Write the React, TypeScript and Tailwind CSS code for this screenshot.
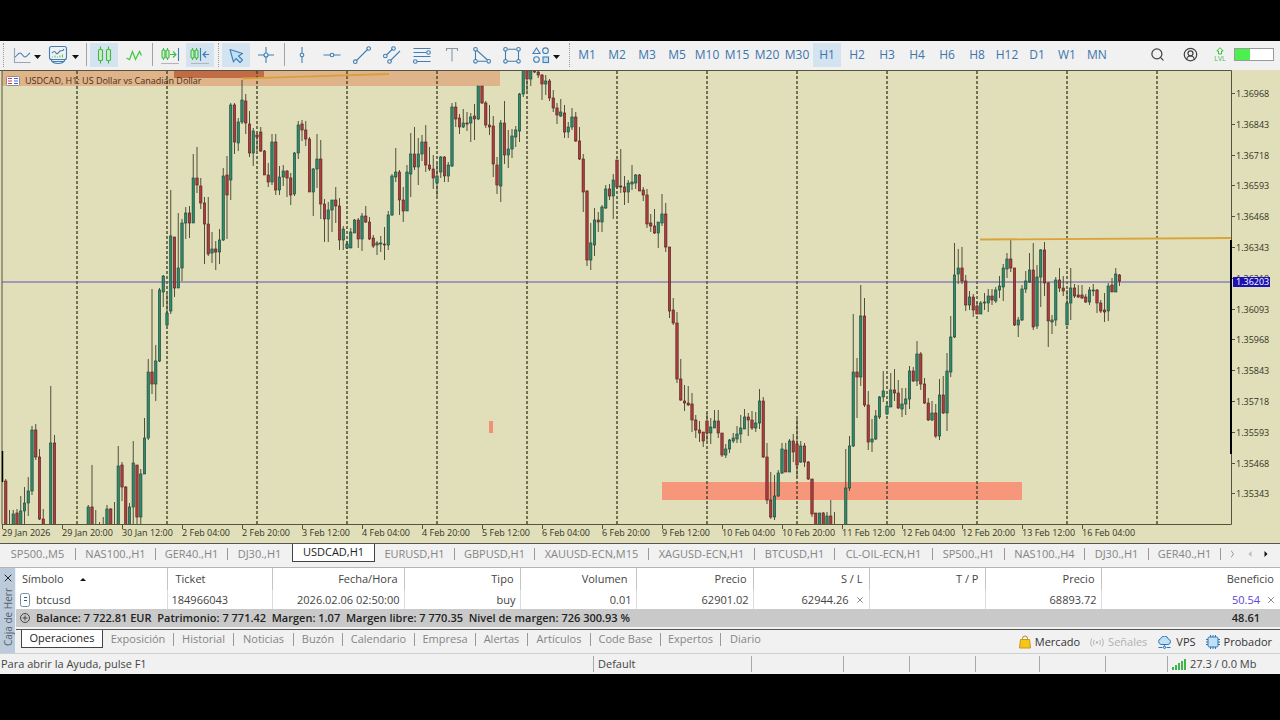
import React, { useState } from 'react'
import clsx from 'clsx'
import { Search, CircleUserRound, X } from 'lucide-react'

type Candle = [number, number, number, number, number, number]

// bar index, high, body top, body bottom, low, 1 = bull / 0 = bear
const CANDLES: Candle[] = [
  [1, 479, 481, 530, 530, 0], [2, 510, 527, 530, 530, 0], [3, 510, 514, 530, 530, 1], [4, 509, 513, 530, 530, 0],
  [5, 496, 511, 530, 530, 1], [6, 487, 503, 511, 530, 1], [7, 477, 491, 503, 516, 1], [8, 426, 430, 491, 495, 1],
  [9, 424, 430, 457, 460, 0], [10, 449, 457, 519, 520, 0], [11, 509, 519, 530, 530, 0], [13, 386, 443, 530, 530, 1],
  [14, 435, 443, 530, 530, 0], [23, 505, 507, 530, 530, 1], [24, 465, 507, 530, 530, 0], [25, 510, 527, 530, 530, 0],
  [26, 522, 527, 530, 530, 0], [27, 517, 527, 530, 530, 1], [28, 505, 509, 530, 530, 1], [29, 508, 509, 530, 530, 0],
  [30, 502, 527, 530, 530, 0], [31, 446, 466, 530, 530, 1], [32, 462, 465, 487, 501, 0], [33, 486, 487, 530, 530, 0],
  [34, 503, 507, 530, 530, 1], [35, 441, 463, 507, 530, 1], [36, 465, 465, 517, 524, 0], [37, 469, 474, 517, 524, 1],
  [38, 418, 438, 474, 474, 1], [39, 359, 372, 438, 440, 1], [40, 289, 372, 384, 394, 0], [41, 345, 361, 384, 401, 1],
  [42, 288, 290, 361, 362, 1], [43, 275, 276, 292, 307, 1], [44, 294, 313, 325, 326, 1], [45, 190, 236, 311, 314, 1],
  [46, 237, 237, 288, 297, 0], [47, 213, 268, 288, 288, 1], [48, 219, 223, 268, 281, 1], [49, 207, 213, 223, 239, 1],
  [50, 206, 213, 223, 238, 0], [51, 154, 178, 223, 223, 1], [52, 147, 178, 185, 193, 0], [53, 178, 186, 203, 209, 0],
  [54, 197, 203, 224, 264, 0], [55, 197, 224, 254, 256, 0], [56, 232, 249, 253, 263, 1], [57, 241, 249, 252, 270, 0],
  [58, 229, 240, 252, 264, 1], [59, 168, 176, 240, 241, 1], [60, 156, 175, 195, 239, 0], [61, 103, 105, 180, 200, 1],
  [62, 103, 105, 142, 154, 0], [63, 118, 122, 143, 151, 1], [64, 80, 100, 122, 124, 1], [65, 94, 101, 123, 134, 0],
  [66, 111, 124, 153, 157, 0], [67, 128, 131, 153, 166, 1], [68, 133, 135, 137, 151, 0], [69, 127, 132, 151, 152, 0],
  [70, 150, 151, 175, 175, 0], [71, 163, 175, 182, 187, 0], [72, 134, 142, 182, 185, 1], [73, 134, 142, 190, 195, 0],
  [74, 166, 177, 190, 195, 1], [75, 165, 171, 177, 186, 1], [76, 170, 171, 178, 197, 0], [77, 173, 178, 195, 205, 0],
  [78, 152, 153, 194, 196, 1], [79, 121, 125, 153, 159, 1], [80, 120, 124, 130, 141, 0], [81, 121, 130, 139, 146, 0],
  [82, 137, 139, 192, 192, 0], [83, 168, 169, 192, 216, 1], [84, 134, 159, 169, 188, 1], [85, 140, 159, 204, 219, 0],
  [86, 199, 204, 219, 242, 0], [87, 202, 210, 219, 242, 1], [88, 200, 200, 210, 232, 1], [89, 187, 200, 206, 223, 0],
  [90, 198, 206, 240, 250, 0], [91, 226, 229, 240, 250, 1], [92, 241, 244, 248, 249, 1], [93, 228, 232, 248, 248, 1],
  [94, 219, 220, 233, 233, 1], [95, 218, 220, 239, 248, 0], [96, 213, 216, 239, 251, 1], [97, 206, 216, 222, 223, 0],
  [98, 217, 222, 239, 240, 0], [99, 235, 238, 246, 248, 0], [100, 241, 243, 245, 255, 1], [101, 236, 243, 244, 252, 1],
  [102, 227, 244, 245, 260, 0], [103, 211, 215, 245, 250, 1], [104, 174, 176, 215, 216, 1], [105, 148, 172, 177, 182, 1],
  [106, 170, 172, 200, 215, 0], [107, 187, 200, 211, 222, 0], [108, 165, 172, 211, 211, 1], [109, 133, 154, 174, 197, 1],
  [110, 127, 154, 167, 170, 0], [111, 138, 154, 167, 185, 1], [112, 135, 142, 154, 161, 1], [113, 125, 142, 165, 172, 0],
  [114, 147, 165, 169, 171, 0], [115, 155, 169, 178, 189, 0], [116, 163, 176, 183, 196, 1], [117, 156, 157, 172, 178, 1],
  [118, 156, 157, 176, 182, 0], [119, 162, 165, 176, 182, 1], [120, 103, 107, 166, 167, 1], [121, 102, 107, 119, 127, 0],
  [122, 114, 118, 127, 134, 0], [123, 109, 123, 127, 128, 1], [124, 112, 123, 124, 131, 0], [125, 113, 117, 123, 142, 1],
  [126, 104, 116, 119, 140, 0], [127, 86, 86, 119, 120, 1], [128, 86, 86, 103, 104, 0], [129, 101, 103, 125, 128, 0],
  [130, 105, 125, 127, 135, 0], [131, 116, 126, 164, 177, 0], [132, 157, 165, 185, 194, 0], [133, 120, 123, 186, 202, 1],
  [134, 101, 123, 155, 164, 0], [135, 130, 149, 155, 168, 1], [136, 129, 136, 149, 158, 1], [137, 126, 130, 137, 147, 1],
  [138, 93, 94, 131, 142, 1], [139, 70, 70, 94, 97, 1], [140, 70, 70, 79, 91, 0], [141, 70, 70, 79, 86, 1],
  [142, 70, 70, 72, 73, 0], [143, 70, 72, 75, 78, 0], [144, 74, 75, 84, 100, 0], [145, 75, 81, 84, 95, 1],
  [146, 79, 81, 98, 101, 0], [147, 90, 98, 108, 112, 0], [148, 103, 108, 115, 124, 0], [149, 99, 112, 116, 117, 1],
  [150, 105, 113, 132, 138, 0], [151, 122, 127, 132, 138, 1], [152, 108, 117, 127, 130, 1], [153, 112, 117, 141, 142, 0],
  [154, 127, 141, 159, 160, 0], [155, 154, 159, 192, 212, 0], [156, 190, 191, 260, 266, 0], [157, 223, 243, 260, 270, 1],
  [158, 208, 220, 245, 256, 1], [159, 212, 220, 222, 232, 0], [160, 205, 207, 222, 232, 1], [161, 185, 189, 208, 209, 1],
  [162, 184, 189, 196, 200, 0], [163, 174, 180, 196, 219, 1], [164, 160, 160, 187, 189, 0], [165, 149, 186, 187, 193, 0],
  [166, 176, 187, 192, 205, 0], [167, 180, 183, 192, 203, 1], [168, 165, 182, 184, 190, 1], [169, 174, 175, 183, 189, 1],
  [170, 174, 175, 191, 191, 0], [171, 187, 190, 195, 201, 0], [172, 189, 195, 224, 228, 0], [173, 214, 223, 226, 232, 0],
  [174, 209, 226, 233, 234, 0], [175, 222, 222, 233, 248, 1], [176, 194, 214, 223, 226, 1], [177, 203, 214, 247, 252, 0],
  [178, 247, 247, 311, 318, 0], [179, 298, 310, 323, 325, 0], [180, 312, 323, 379, 383, 0], [181, 359, 379, 400, 401, 0],
  [182, 385, 401, 403, 411, 0], [183, 386, 403, 405, 406, 0], [184, 393, 404, 420, 432, 0], [185, 415, 420, 430, 438, 0],
  [186, 421, 430, 433, 442, 0], [187, 432, 432, 441, 447, 0], [188, 413, 421, 433, 441, 0], [189, 418, 427, 433, 444, 1],
  [190, 410, 421, 428, 428, 1], [191, 410, 421, 433, 438, 0], [192, 433, 433, 455, 457, 0], [193, 444, 449, 455, 458, 1],
  [194, 439, 440, 449, 453, 1], [195, 433, 438, 441, 443, 1], [196, 426, 434, 439, 443, 1], [197, 415, 428, 434, 443, 1],
  [198, 409, 417, 429, 429, 1], [199, 413, 417, 420, 436, 0], [200, 411, 420, 428, 430, 0], [201, 412, 423, 428, 432, 1],
  [202, 389, 401, 423, 429, 1], [203, 397, 401, 457, 458, 0], [204, 443, 457, 500, 504, 0], [205, 472, 500, 517, 519, 0],
  [206, 475, 496, 517, 520, 1], [207, 470, 473, 496, 497, 1], [208, 443, 449, 473, 474, 1], [209, 443, 450, 472, 472, 0],
  [210, 439, 441, 472, 472, 1], [211, 434, 441, 452, 462, 0], [212, 419, 444, 465, 477, 0], [213, 441, 446, 462, 463, 1],
  [214, 443, 446, 462, 467, 0], [215, 461, 462, 479, 480, 0], [216, 479, 479, 514, 517, 0], [217, 513, 513, 530, 530, 0],
  [218, 513, 513, 530, 530, 1], [219, 512, 513, 530, 530, 0], [220, 512, 516, 530, 530, 1], [221, 500, 516, 530, 530, 0],
  [222, 512, 527, 530, 530, 0], [225, 449, 488, 530, 530, 1], [226, 436, 446, 488, 491, 1], [227, 314, 372, 446, 447, 1],
  [228, 358, 372, 377, 418, 0], [229, 285, 316, 377, 386, 1], [230, 298, 316, 405, 407, 0], [231, 391, 405, 442, 450, 0],
  [232, 419, 439, 442, 452, 1], [233, 410, 416, 439, 440, 1], [234, 396, 397, 417, 419, 1], [235, 371, 391, 397, 402, 1],
  [236, 402, 406, 414, 415, 1], [237, 373, 390, 407, 407, 1], [238, 369, 390, 393, 401, 0], [239, 380, 393, 408, 409, 0],
  [240, 388, 404, 409, 417, 1], [241, 388, 399, 404, 415, 1], [242, 366, 371, 399, 409, 1], [243, 367, 371, 381, 382, 0],
  [244, 341, 354, 381, 386, 1], [245, 352, 354, 384, 390, 0], [246, 378, 384, 403, 404, 0], [247, 398, 403, 420, 421, 0],
  [248, 401, 413, 420, 421, 1], [249, 404, 413, 436, 438, 0], [250, 379, 395, 436, 440, 1], [251, 376, 395, 413, 414, 0],
  [252, 353, 371, 413, 431, 1], [253, 316, 337, 372, 377, 1], [254, 243, 275, 337, 338, 1], [255, 249, 268, 274, 284, 1],
  [256, 247, 268, 281, 284, 0], [257, 275, 281, 305, 311, 0], [258, 291, 297, 305, 310, 1], [259, 294, 297, 310, 317, 0],
  [260, 302, 306, 314, 314, 0], [261, 301, 303, 314, 314, 1], [262, 293, 302, 303, 310, 1], [263, 289, 296, 303, 312, 1],
  [264, 289, 296, 300, 305, 0], [265, 287, 290, 301, 303, 1], [266, 276, 286, 290, 298, 1], [267, 264, 268, 287, 301, 1],
  [268, 253, 259, 269, 278, 1], [269, 240, 259, 268, 272, 0], [270, 268, 268, 325, 326, 0], [271, 317, 320, 325, 337, 1],
  [272, 285, 289, 320, 321, 1], [273, 271, 281, 289, 293, 1], [274, 253, 270, 282, 283, 1], [275, 243, 270, 327, 330, 0],
  [276, 265, 277, 326, 329, 1], [277, 249, 250, 277, 307, 1], [278, 242, 250, 283, 296, 0], [279, 282, 283, 321, 347, 0],
  [280, 315, 320, 322, 334, 1], [281, 277, 280, 320, 326, 1], [282, 268, 280, 288, 292, 0], [283, 276, 288, 291, 296, 0],
  [284, 290, 303, 325, 325, 1], [285, 268, 288, 303, 320, 1], [286, 284, 288, 296, 298, 0], [287, 285, 295, 297, 298, 0],
  [288, 285, 295, 298, 299, 0], [289, 294, 297, 302, 303, 0], [290, 287, 290, 302, 305, 1], [291, 284, 290, 291, 296, 1],
  [292, 289, 290, 303, 313, 0], [293, 300, 303, 311, 313, 0], [294, 293, 310, 312, 322, 0], [295, 283, 286, 311, 321, 1],
  [296, 278, 285, 292, 292, 0], [297, 268, 274, 292, 292, 1], [298, 274, 275, 281, 286, 0],
]

const PRICES = [
  '1.36968', '1.36843', '1.36718', '1.36593', '1.36468', '1.36343', '1.36218',
  '1.36093', '1.35968', '1.35843', '1.35718', '1.35593', '1.35468', '1.35343',
]

const TIMES = [
  '29 Jan 2026', '29 Jan 20:00', '30 Jan 12:00', '2 Feb 04:00', '2 Feb 20:00', '3 Feb 12:00', '4 Feb 04:00',
  '4 Feb 20:00', '5 Feb 12:00', '6 Feb 04:00', '6 Feb 20:00', '9 Feb 12:00', '10 Feb 04:00', '10 Feb 20:00',
  '11 Feb 12:00', '12 Feb 04:00', '12 Feb 20:00', '13 Feb 12:00', '16 Feb 04:00',
]

const TIMEFRAMES = [
  'M1', 'M2', 'M3', 'M5', 'M10', 'M15', 'M20', 'M30', 'H1', 'H2', 'H3', 'H4', 'H6', 'H8', 'H12', 'D1', 'W1', 'MN',
]

const CHART_TABS = [
  { name: 'SP500.,M5', width: 'w-[76px]' },
  { name: 'NAS100.,H1', width: 'w-[80px]' },
  { name: 'GER40.,H1', width: 'w-[72px]' },
  { name: 'DJ30.,H1', width: 'w-[64px]' },
  { name: 'USDCAD,H1', width: 'w-[83px]' },
  { name: 'EURUSD,H1', width: 'w-[80px]' },
  { name: 'GBPUSD,H1', width: 'w-[80px]' },
  { name: 'XAUUSD-ECN,M15', width: 'w-[114px]' },
  { name: 'XAGUSD-ECN,H1', width: 'w-[106px]' },
  { name: 'BTCUSD,H1', width: 'w-[80px]' },
  { name: 'CL-OIL-ECN,H1', width: 'w-[98px]' },
  { name: 'SP500.,H1', width: 'w-[72px]' },
  { name: 'NAS100.,H4', width: 'w-[80px]' },
  { name: 'DJ30.,H1', width: 'w-[64px]' },
  { name: 'GER40.,H1', width: 'w-[72px]' },
]

const TOOLBOX_TABS = [
  { name: 'Operaciones', width: 'w-[82px]' },
  { name: 'Exposición', width: 'w-[71px]' },
  { name: 'Historial', width: 'w-[60px]' },
  { name: 'Noticias', width: 'w-[60px]' },
  { name: 'Buzón', width: 'w-[49px]' },
  { name: 'Calendario', width: 'w-[72px]' },
  { name: 'Empresa', width: 'w-[61px]' },
  { name: 'Alertas', width: 'w-[52px]' },
  { name: 'Artículos', width: 'w-[63px]' },
  { name: 'Code Base', width: 'w-[70px]' },
  { name: 'Expertos', width: 'w-[60px]' },
  { name: 'Diario', width: 'w-[49px]' },
]

const barX = (i: number) => 2 + i * 3.75

const Icon = ({ children, color = '#3f7fb5' }: { children: React.ReactNode; color?: string }) => (
  <svg width="20" height="20" viewBox="0 0 20 20" fill="none" stroke={color} strokeWidth="1.1" aria-hidden="true">
    {children}
  </svg>
)

const Caret = () => (
  <svg width="7" height="4" viewBox="0 0 7 4" className="mt-1 shrink-0" aria-hidden="true">
    <path d="M0 0h7L3.500 4z" fill="#111" />
  </svg>
)

const Separator = () => (
  <span className="flex w-1.5 shrink-0 justify-center">
    <span className="h-[23px] w-px bg-[#a3a3a3]" />
  </span>
)

const Handle = () => (
  <span className="flex w-1.5 shrink-0 justify-center">
    <span className="h-6 border-l border-dotted border-[#999]" />
  </span>
)

type ToolProps = { label: string; active?: boolean; children: React.ReactNode }

const Tool = ({ label, active, children }: ToolProps) => (
  <button
    aria-label={label}
    className={clsx('mx-px flex h-6 w-7 shrink-0 items-center justify-center', active && 'bg-[#d3e3f0]')}
  >
    {children}
  </button>
)

const Toolbar = () => {
  const [timeframe, setTimeframe] = useState('H1')

  return (
    <header className="flex h-[29px] items-center bg-[#f1f1f1] pb-0.5">
      <Handle />
      <button aria-label="Charts" className="flex w-[37px] shrink-0 items-center gap-0.5 pl-1.5">
        <Icon>
          <path d="M2.500 3v14.500h16" stroke="#9aa4ad" />
          <path d="M3 12c2-1 3-4 5-4s3 4 5 4 3-3 5-4" />
        </Icon>
        <Caret />
      </button>
      <button aria-label="Indicators" className="flex w-10 shrink-0 items-center justify-center gap-1">
        <Icon>
          <rect x="1.500" y="1.500" width="17" height="13" rx="2" />
          <path d="M3 14.500c1 3 3 4 7 4s6-1 7-4M4.500 16.500h11" />
          <path d="M4 8c2-2 3-2 4 0s3-1 4-2 3 1 4-2" />
          <path d="M4.500 12.500v-1M7 12.500v-2M9.500 12.500v-1M12 12.500v-2M14.500 12.500v-3" stroke="#5cc95c" />
        </Icon>
        <Caret />
      </button>
      <Separator />
      <Tool label="Candles" active>
        <Icon color="#43b943">
          <path d="M6.500 1.500v3M6.500 15.500v3M14.500 1.500v3M14.500 15.500v3" />
          <rect x="4.500" y="4.500" width="4" height="11" rx="1" fill="#c9efc9" />
          <rect x="12.500" y="4.500" width="4" height="11" rx="1" fill="#c9efc9" />
        </Icon>
      </Tool>
      <Tool label="Line chart">
        <Icon color="#43c943">
          <path d="M2.500 13l3 1.500 3-8 3 8 4-8 2 4" strokeWidth="1.3" />
        </Icon>
      </Tool>
      <Separator />
      <Tool label="Auto scroll">
        <Icon color="#43b943">
          <path d="M3.500 3v12M7.500 3v12" />
          <rect x="2" y="5" width="3" height="8" rx="1" fill="#c9efc9" />
          <rect x="6" y="5" width="3" height="8" rx="1" fill="#c9efc9" />
          <path d="M10 9.500h6M13 6.500l3 3-3 3" />
          <path d="M18.500 3v13" stroke="#3f7fb5" />
          <path d="M1 18.500h18" stroke="#b5b5b5" />
        </Icon>
      </Tool>
      <Tool label="Chart shift" active>
        <Icon color="#43b943">
          <path d="M2.500 3v12M6.500 3v12" />
          <rect x="1" y="5" width="3" height="8" rx="1" fill="#c9efc9" />
          <rect x="5" y="5" width="3" height="8" rx="1" fill="#c9efc9" />
          <path d="M10.500 3v13" stroke="#3f7fb5" />
          <path d="M19 9.500h-6M16 6.500l-3 3 3 3" stroke="#3f7fb5" />
          <path d="M1 18.500h18" stroke="#b5b5b5" />
        </Icon>
      </Tool>
      <Handle />
      <Tool label="Cursor" active>
        <Icon>
          <path d="M4 4.500l12.500 4-4 2.500 4 4-2.500 2.500-4-4-2.500 3.500z" fill="#bfe0f6" strokeLinejoin="round" />
        </Icon>
      </Tool>
      <Tool label="Crosshair">
        <Icon>
          <path d="M10 2v6M10 12v6M2 10h6M12 10h6" />
          <circle cx="10" cy="10" r="2" />
        </Icon>
      </Tool>
      <Separator />
      <Tool label="Vertical line">
        <Icon>
          <path d="M10 2v6M10 12v6" />
          <circle cx="10" cy="10" r="1.800" />
        </Icon>
      </Tool>
      <Tool label="Horizontal line">
        <Icon>
          <path d="M1.500 10h6.500M12 10h6.500" />
          <circle cx="10" cy="10" r="1.800" />
        </Icon>
      </Tool>
      <Tool label="Trend line">
        <Icon>
          <path d="M4.500 15.500l11-11" />
          <circle cx="3.300" cy="16.700" r="1.800" />
          <circle cx="16.700" cy="3.500" r="1.800" />
        </Icon>
      </Tool>
      <Tool label="Channel">
        <Icon>
          <path d="M4.500 10l6-6M8.500 15.500l9.500-9.500" />
          <circle cx="3.300" cy="11" r="1.800" />
          <circle cx="11.500" cy="3.500" r="1.800" />
          <circle cx="7.500" cy="16.500" r="1.800" />
        </Icon>
      </Tool>
      <Tool label="Fibonacci">
        <Icon>
          <path d="M1.500 3.500h17M1.500 7.500h13M1.500 11.500h17M5 16.500h13.500" />
          <circle cx="16.500" cy="7.500" r="1.800" fill="#f1f1f1" />
          <circle cx="3.300" cy="16.500" r="1.800" />
        </Icon>
      </Tool>
      <Tool label="Text">
        <Icon color="#8797a5">
          <path d="M4.500 6V3.500h11V6M10 3.500v13" />
        </Icon>
      </Tool>
      <Tool label="Triangle">
        <Icon>
          <path d="M3.500 6v8.500M5.500 16.300h9M5 5.500l10.500 9.500" />
          <circle cx="3.500" cy="4.300" r="1.800" />
          <circle cx="3.500" cy="16.300" r="1.800" />
          <circle cx="16.700" cy="16.300" r="1.800" />
        </Icon>
      </Tool>
      <Tool label="Rectangle">
        <Icon>
          <path d="M3.500 6v8.500M16.500 6v8.500M5.500 4.300h9M5.500 16.300h9" />
          <circle cx="3.500" cy="4.300" r="1.800" />
          <circle cx="16.500" cy="4.300" r="1.800" />
          <circle cx="3.500" cy="16.300" r="1.800" />
          <circle cx="16.500" cy="16.300" r="1.800" />
        </Icon>
      </Tool>
      <button aria-label="Shapes" className="flex w-[39px] shrink-0 items-center gap-0.5 pl-1">
        <Icon>
          <path d="M5.500 3l3.500 5.500H2z" />
          <circle cx="14.500" cy="5.700" r="2.800" />
          <circle cx="5.500" cy="14.500" r="2.800" />
          <rect x="12" y="12" width="5.500" height="5.500" fill="#bfe0f6" />
        </Icon>
        <Caret />
      </button>
      <Handle />
      {TIMEFRAMES.map((tf) => (
        <button
          key={tf}
          onClick={() => setTimeframe(tf)}
          className={clsx(
            'mx-px h-6 w-7 shrink-0 text-[12px] text-[#3a76ac]',
            tf === timeframe && 'bg-[#d3e3f0]',
          )}
        >
          {tf}
        </button>
      ))}
      <div className="ml-auto flex items-center pr-1.5">
        <button aria-label="Search" className="mr-4.5 text-[#444]">
          <Search size={15} strokeWidth={2} />
        </button>
        <button aria-label="Account" className="mr-3.5 text-[#444]">
          <CircleUserRound size={15} strokeWidth={2} />
        </button>
        <div className="mr-1.5 flex w-4 flex-col items-center text-[#3fbf3f]">
          <svg width="8" height="8" viewBox="0 0 8 8" fill="none" stroke="currentColor" aria-hidden="true">
            <path d="M4 .7L7.200 4H5.500v3h-3V4H.8z" />
          </svg>
          <span className="text-[7px] leading-[7px]">LVL</span>
        </div>
        <div className="flex h-[13px] w-10 border border-[#999] bg-white">
          <div className="w-[15px] bg-[#4cf04c]" />
        </div>
      </div>
    </header>
  )
}

const Chart = () => (
  <svg viewBox="0 70 1280 473" className="block w-full bg-[#e0dfb9]" role="img" aria-label="USDCAD H1">
    <defs>
      <clipPath id="plot">
        <rect x="2" y="70" width="1229" height="454" />
      </clipPath>
    </defs>

    <rect x="2" y="71" width="498" height="15" fill="#dfb48b" />
    <rect x="174" y="71" width="90" height="7" fill="#c26c45" />
    <rect x="489" y="421" width="4" height="12" fill="#f38f74" />
    <rect x="662" y="482" width="360" height="18" fill="#f6977b" />

    {Array.from({ length: 13 }, (_, i) => (
      <path key={i} d={`M${77 + i * 90} 71V524`} stroke="#45442a" strokeWidth="1.400" strokeDasharray="3 2" />
    ))}
    <path d="M2 282H1231" stroke="#5856b4" strokeWidth="1.200" />

    <g clipPath="url(#plot)">
      {CANDLES.map(([i, high, top, bottom, low, bull]) => (
        <g key={i}>
          <path d={`M${barX(i)} ${high}V${low}`} stroke="#3f3f2c" strokeWidth="0.900" />
          <rect
            x={barX(i) - 1.2}
            y={top}
            width="2.400"
            height={Math.max(bottom - top, 1)}
            fill={bull ? '#2f8a6c' : '#ad3c3c'}
            stroke={bull ? '#1c4436' : '#541f1f'}
            strokeWidth="0.600"
          />
        </g>
      ))}
    </g>
    <path d="M242 78.500L389 74" stroke="#d9a03a" strokeWidth="1.800" />
    <path d="M980 239.500L1231 238" stroke="#dba43a" strokeWidth="1.800" />

    {/* frame and the two bars that show the visible range */}
    <path d="M0 70.500H1231.500V524.500H2V70.500" fill="none" stroke="#55553f" />
    <path d="M1231 240V454" stroke="#000" strokeWidth="2" />
    <path d="M2.500 451V482" stroke="#000" strokeWidth="1.500" />

    <rect x="6.500" y="76.500" width="13" height="9" rx="1" fill="#fff" stroke="#8b8ba0" />
    <path d="M8 78.500h4M8 81h4M8 83.500h4" stroke="#d04040" />
    <path d="M14 78.500h4M14 81h4M14 83.500h4" stroke="#4060d0" />
    <g fontFamily="'Open Sans', sans-serif" fontSize="9" fill="#33331f">
      <text x="25" y="84" fill="#4a3018">
        USDCAD, H1: US Dollar vs Canadian Dollar
      </text>
      {PRICES.map((price, i) => (
        <g key={price}>
          <path d={`M1232 ${Math.round(93 + i * 30.8) + 0.5}h3`} stroke="#55553f" />
          <text x="1236" y={Math.round(93 + i * 30.8) + 4}>{price}</text>
        </g>
      ))}
      {TIMES.map((time, i) => (
        <g key={time}>
          <path d={`M${2.5 + i * 60} 525v4`} stroke="#55553f" />
          <text x={2 + i * 60} y="536">{time}</text>
        </g>
      ))}
      <rect x="1233" y="277" width="37" height="10" fill="#1c12b4" />
      <text x="1236" y="285" fill="#fff">1.36203</text>
    </g>
  </svg>
)

const ChartTabs = () => {
  const [active, setActive] = useState(4)

  return (
    <nav className="flex h-6 items-start border-t border-[#555] bg-[#f1f1f1] text-[11px] text-[#858585]">
      {CHART_TABS.map((tab, i) => (
        <button
          key={i}
          onClick={() => setActive(i)}
          className={clsx(
            'flex shrink-0 items-center justify-center',
            tab.width,
            i === active
              ? 'h-[18px] border-x border-b border-[#444] bg-white text-[#222]'
              : 'mt-1 h-3 border-r border-[#999]',
            i === active - 1 && 'border-r-transparent',
          )}
        >
          {tab.name}
        </button>
      ))}
      <div className="flex h-[19px] flex-1 items-center justify-between pr-3 pl-2.5 text-[#999]">
        <svg width="4" height="8" viewBox="0 0 4 8" fill="none" stroke="currentColor" aria-hidden="true">
          <path d="M0 .5L2.500 4 0 7.500" />
        </svg>
        <button aria-label="Previous">
          <svg width="4" height="6" viewBox="0 0 4 6" className="block" aria-hidden="true">
            <path d="M3.500 0v6L.5 3z" fill="#bbb" />
          </svg>
        </button>
        <button aria-label="Next">
          <svg width="4" height="6" viewBox="0 0 4 6" className="block" aria-hidden="true">
            <path d="M.5 0v6l3-3z" fill="#111" />
          </svg>
        </button>
      </div>
    </nav>
  )
}

const HEAD = 'h-[22px] border-r border-[#c4c4c4] px-1.5 font-normal'
const CELL = 'h-[19px] border-r border-[#dcdcdc] px-1'

const Trades = () => (
  <table className="w-full table-fixed border-collapse bg-white text-right text-[11px] leading-[14px] text-[#444]">
    <colgroup>
      <col className="w-[151px]" />
      <col className="w-[105px]" />
      <col className="w-[132px]" />
      <col className="w-[116px]" />
      <col className="w-[116px]" />
      <col className="w-[117px]" />
      <col className="w-[116px]" />
      <col className="w-[116px]" />
      <col className="w-[116px]" />
      <col />
    </colgroup>
    <thead>
      <tr>
        <th className={clsx(HEAD, 'text-left')}>
          <span className="flex items-center gap-4">
            Símbolo
            <svg width="6" height="3" viewBox="0 0 6 3" aria-hidden="true">
              <path d="M0 3h6L3 0z" fill="#111" />
            </svg>
          </span>
        </th>
        <th className={clsx(HEAD, 'pl-2 text-left')}>Ticket</th>
        <th className={HEAD}>Fecha/Hora</th>
        <th className={HEAD}>Tipo</th>
        <th className={clsx(HEAD, 'pr-2')}>Volumen</th>
        <th className={HEAD}>Precio</th>
        <th className={HEAD}>S / L</th>
        <th className={HEAD}>T / P</th>
        <th className={HEAD}>Precio</th>
        <th className="h-[22px] pr-1.5 font-normal">Beneficio</th>
      </tr>
    </thead>
    <tbody>
      <tr>
        <td className={clsx(CELL, 'text-left')}>
          <span className="flex items-center gap-1.5">
            <svg width="10" height="14" viewBox="0 0 10 14" fill="none" stroke="#6d8fae" aria-hidden="true">
              <rect x=".5" y=".5" width="9" height="13" rx="2" />
              <path d="M4 4.500h3M4 7.500h3" stroke="#555" />
            </svg>
            btcusd
          </span>
        </td>
        <td className={clsx(CELL, 'text-left')}>184966043</td>
        <td className={CELL}>2026.02.06 02:50:00</td>
        <td className={CELL}>buy</td>
        <td className={CELL}>0.01</td>
        <td className={CELL}>62901.02</td>
        <td className={CELL}>
          <span className="flex items-center justify-end gap-1.5">
            62944.26
            <button aria-label="Remove stop loss">
              <X size={10} className="block text-[#777]" />
            </button>
          </span>
        </td>
        <td className={CELL} />
        <td className={CELL}>68893.72</td>
        <td className="pr-1">
          <span className="flex items-center justify-end gap-1.5">
            <span className="text-[#5a45d8]">50.54</span>
            <button aria-label="Close position">
              <X size={10} className="block text-[#777]" />
            </button>
          </span>
        </td>
      </tr>
    </tbody>
  </table>
)

const Toolbox = () => {
  const [active, setActive] = useState(0)

  return (
    <section className="flex border-t border-[#b5b5b5] bg-[#f1f1f1]">
      <div className="flex w-[15px] shrink-0 flex-col items-center bg-[#bccbdc] pt-1">
        <button aria-label="Close toolbox">
          <X size={12} className="block text-[#222]" />
        </button>
        <span className="mt-1 rotate-180 text-[10px] leading-[14px] whitespace-nowrap text-[#55606c] [writing-mode:vertical-rl]">
          Caja de Herr
        </span>
      </div>
      <div className="min-w-0 flex-1 pl-px">
        <Trades />
        <div className="flex h-[18px] items-center bg-[#c9c9c9] text-[11px] font-semibold text-[#222]">
          <svg width="10" height="10" viewBox="0 0 10 10" fill="none" stroke="#444" className="ml-1 mr-1.5" aria-hidden="true">
            <circle cx="5" cy="5" r="4.500" />
            <path d="M2.500 5h5M5 2.500v5" />
          </svg>
          <span className="whitespace-pre">
            Balance: 7 722.81 EUR  Patrimonio: 7 771.42  Margen: 1.07  Margen libre: 7 770.35  Nivel de margen: 726 300.93 %
          </span>
          <span className="mr-5 ml-auto">48.61</span>
        </div>
        <div className="mt-0.5 flex h-6 items-start border-t border-[#555] pl-[5px] text-[11px] text-[#858585]">
          {TOOLBOX_TABS.map((tab, i) => (
            <button
              key={tab.name}
              onClick={() => setActive(i)}
              className={clsx(
                'flex shrink-0 items-center justify-center',
                tab.width,
                i === active
                  ? 'h-[18px] border-x border-b border-[#444] bg-white text-[#222]'
                  : 'mt-[3px] h-[13px] border-r border-[#999] last-of-type:border-r-0',
              )}
            >
              {tab.name}
            </button>
          ))}
          <div className="mt-1 ml-auto flex items-center gap-2.5 pr-2 text-[#333]">
            <a href="#mercado" className="flex items-center gap-1">
              <svg width="12" height="14" viewBox="0 0 12 14" aria-hidden="true">
                <path d="M3.500 5V3.500a2.500 2.500 0 015 0V5" fill="none" stroke="#b08a20" />
                <path d="M1.500 4.500h9L11.500 13H.5z" fill="#f5c518" stroke="#c9981a" />
              </svg>
              Mercado
            </a>
            <a href="#senales" className="flex items-center gap-1 text-[#b0b0b0]">
              <svg width="14" height="9" viewBox="0 0 14 9" fill="none" stroke="currentColor" aria-hidden="true">
                <path d="M2 .5C.3 2.500.3 6.500 2 8.500M12 .5c1.700 2 1.700 6 0 8M4.300 2c-1 1.500-1 3.500 0 5M9.700 2c1 1.500 1 3.500 0 5" />
                <circle cx="7" cy="4.500" r=".8" fill="currentColor" />
              </svg>
              Señales
            </a>
            <a href="#vps" className="flex items-center gap-1">
              <svg width="15" height="13" viewBox="0 0 15 13" fill="#bfe0f6" stroke="#2f76b5" aria-hidden="true">
                <path d="M4 8.500a3 3 0 01-.3-5.800 4 4 0 017.600.3 2.800 2.800 0 01-.3 5.500z" />
                <path d="M7.500 8.500V11M1.500 11.500h4M9.500 11.500h4" fill="none" />
                <circle cx="7.500" cy="11.300" r="1.200" />
              </svg>
              VPS
            </a>
            <a href="#probador" className="flex items-center gap-1">
              <svg width="14" height="14" viewBox="0 0 14 14" stroke="#2f76b5" aria-hidden="true">
                <path d="M4.500 0v14M7 0v14M9.500 0v14M0 4.500h14M0 7h14M0 9.500h14" />
                <rect x="2" y="2" width="10" height="10" rx="1.500" fill="#bfe0f6" />
              </svg>
              Probador
            </a>
          </div>
        </div>
      </div>
    </section>
  )
}

const StatusBar = () => (
  <footer className="flex h-[21px] items-center border-t border-[#cfcfcf] bg-[#f1f1f1] text-[11px] text-[#444]">
    <span className="flex-1 pl-px">Para abrir la Ayuda, pulse F1</span>
    <span className="flex h-4 w-[158px] items-center border-l border-[#a8a8a8] pl-1">Default</span>
    <span className="h-4 w-[92px] border-l border-[#a8a8a8]" />
    <span className="h-4 w-[66px] border-l border-[#a8a8a8]" />
    <span className="h-4 w-[66px] border-l border-[#a8a8a8]" />
    <span className="h-4 w-[64px] border-l border-[#a8a8a8]" />
    <span className="h-4 w-[66px] border-l border-[#a8a8a8]" />
    <span className="h-4 w-[62px] border-l border-[#a8a8a8]" />
    <span className="flex h-4 w-[113px] items-center gap-1 border-l border-[#a8a8a8] pl-1">
      <svg width="14" height="11" viewBox="0 0 14 11" fill="#3fb54a" aria-hidden="true">
        <path d="M0 8h2v3H0zM3 6h2v5H3zM6 4h2v7H6zM9 2h2v9H9zM12 0h2v11h-2z" />
      </svg>
      27.3 / 0.0 Mb
    </span>
  </footer>
)

const App = () => {
  return (
    <div className="min-h-screen bg-black py-[41px] font-['Open_Sans',sans-serif]">
      <Toolbar />
      <main>
        <Chart />
        <ChartTabs />
        <Toolbox />
      </main>
      <StatusBar />
    </div>
  )
}

export default App
